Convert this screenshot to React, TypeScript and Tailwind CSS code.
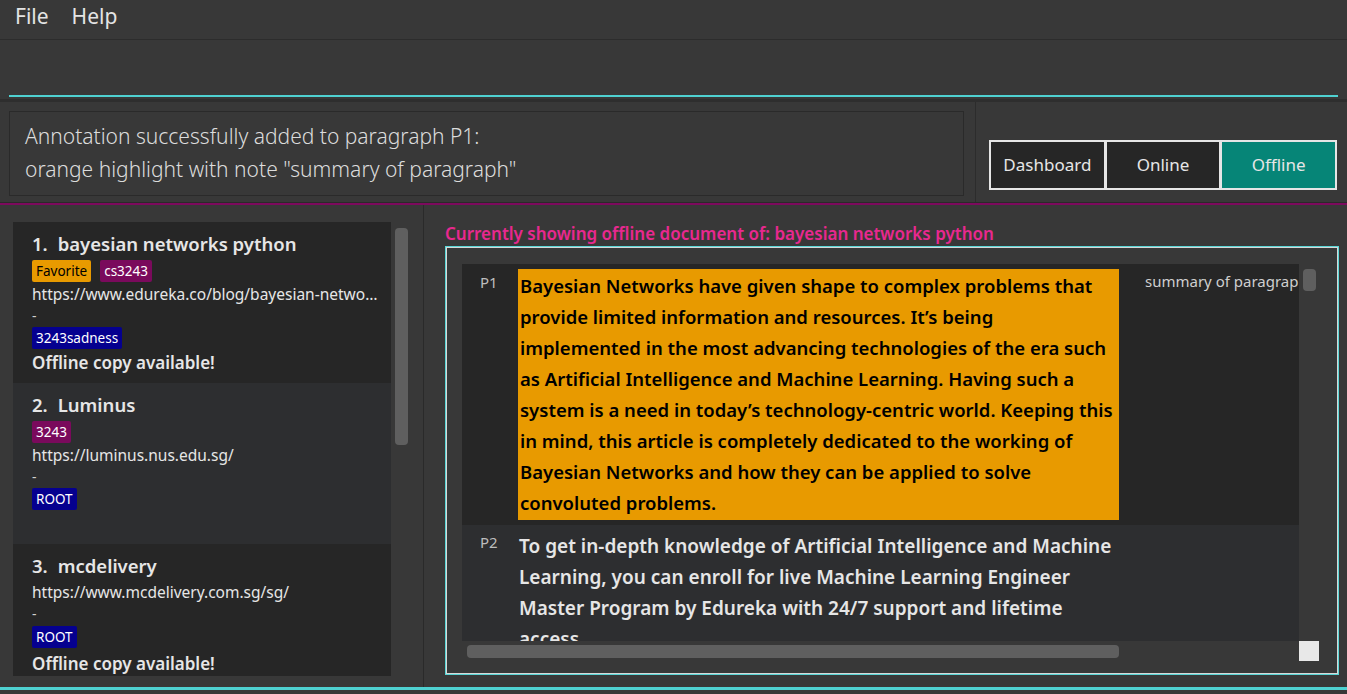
import React from 'react';

const FONT = { fontFamily: '"Noto Sans", "Open Sans", sans-serif' };

type Bookmark = {
  idx: number;
  title: string;
  tags: { label: string; color: string }[];
  url: string;
  folder: string;
  offline: boolean;
  bg: string;
};

const bookmarks: Bookmark[] = [
  {
    idx: 1,
    title: 'bayesian networks python',
    tags: [
      { label: 'Favorite', color: 'bg-[#e89a00] text-black' },
      { label: 'cs3243', color: 'bg-[#7a0a5c] text-white' },
    ],
    url: 'https://www.edureka.co/blog/bayesian-networks/',
    folder: '3243sadness',
    offline: true,
    bg: 'bg-[#262626]',
  },
  {
    idx: 2,
    title: 'Luminus',
    tags: [{ label: '3243', color: 'bg-[#7a0a5c] text-white' }],
    url: 'https://luminus.nus.edu.sg/',
    folder: 'ROOT',
    offline: false,
    bg: 'bg-[#2d2e30]',
  },
  {
    idx: 3,
    title: 'mcdelivery',
    tags: [],
    url: 'https://www.mcdelivery.com.sg/sg/',
    folder: 'ROOT',
    offline: true,
    bg: 'bg-[#262626]',
  },
];

function BookmarkCard({ b }: { b: Bookmark }) {
  return (
    <div className={`${b.bg} h-[161px] shrink-0 pl-[19px] pr-[10px] pt-[10px] text-[#e6e6e6]`}>
      <div className="flex items-center text-[18.5px] font-semibold leading-[24px] gap-[10px]">
        <span>{b.idx}.</span>
        <span>{b.title}</span>
      </div>
      {b.tags.length > 0 && (
        <div className="flex gap-[9px] mt-[4px]">
          {b.tags.map((t) => (
            <span key={t.label} className={`${t.color} text-[13.5px] leading-[22px] px-[4px] rounded-[2px]`}>
              {t.label}
            </span>
          ))}
        </div>
      )}
      <div
        className={`text-[15.5px] leading-[22px] whitespace-nowrap overflow-hidden text-ellipsis w-[347px] ${
          b.tags.length > 0 ? 'mt-[1px]' : 'mt-[3px]'
        }`}
      >
        {b.url}
      </div>
      <div className="text-[14px] leading-[22px] text-[#cfcfcf]">-</div>
      <div className={`flex ${b.tags.length > 0 ? '' : 'mt-[1px]'}`}>
        <span className="bg-[#05008f] text-white text-[13.5px] leading-[22px] px-[4px] rounded-[2px]">{b.folder}</span>
      </div>
      {b.offline && (
        <div className={`text-[17px] font-semibold leading-[26px] ${b.tags.length > 0 ? 'mt-[1px]' : 'mt-[3px]'}`}>
          Offline copy available!
        </div>
      )}
    </div>
  );
}

const p1 =
  'Bayesian Networks have given shape to complex problems that provide limited information and resources. It\u2019s being implemented in the most advancing technologies of the era such as Artificial Intelligence and Machine Learning. Having such a system is a need in today\u2019s technology-centric world. Keeping this in mind, this article is completely dedicated to the working of Bayesian Networks and how they can be applied to solve convoluted problems.';
const p2 =
  'To get in-depth knowledge of Artificial Intelligence and Machine Learning, you can enroll for live Machine Learning Engineer Master Program by Edureka with 24/7 support and lifetime access.';

export default function App() {
  return (
    <div className="w-[1347px] h-[694px] bg-[#383838] flex flex-col overflow-hidden" style={FONT}>
      {/* menu */}
      <div className="h-[40px] shrink-0 flex items-center gap-[23px] px-[15px] pb-[5px] border-b border-[#2c2c2c] text-[21px] text-[#e4e4e4]">
        <span>File</span>
        <span>Help</span>
      </div>

      {/* command box */}
      <div className="h-[62px] shrink-0 px-[9px] pt-[14px] border-b-[3px] border-[#2e2e2e]">
        <div className="h-[43px] border-b-2 border-[#4fd1d1]" />
      </div>

      {/* result + tabs */}
      <div className="h-[100px] shrink-0 flex">
        <div className="w-[976px] shrink-0 border-r border-[#2c2c2c] pl-[9px] pt-[9px]">
          <div className="w-[955px] h-[85px] border border-[#2a2a2a] pl-[15px] pt-[8px] text-[21px] leading-[33px] text-[#dcdcdc] font-light">
            <div>Annotation successfully added to paragraph P1:</div>
            <div>orange highlight with note "summary of paragraph"</div>
          </div>
        </div>
        <div className="flex-1 pl-[13px] pt-[38px]">
          <div className="flex gap-[3px] p-[2px] bg-[#e6e6e6] w-[348px] h-[50px]">
            {['Dashboard', 'Online', 'Offline'].map((t) => (
              <div
                key={t}
                className={`flex-1 flex items-center justify-center text-[17px] ${
                  t === 'Offline' ? 'bg-[#068577] text-[#e6e6e6]' : 'bg-[#262626] text-[#e6e6e6]'
                }`}
              >
                {t}
              </div>
            ))}
          </div>
        </div>
      </div>

      <div className="h-[3px] shrink-0 bg-[#7d0a5e] border-t border-[#2a2a2a]" />

      {/* main */}
      <div className="flex flex-1 min-h-0">
        {/* list panel */}
        <div className="w-[424px] shrink-0 border-r border-[#2a2a2a] flex pl-[13px] pt-[17px] pb-[11px]">
          <div className="w-[378px] flex flex-col overflow-hidden">
            {bookmarks.map((b) => (
              <BookmarkCard key={b.idx} b={b} />
            ))}
          </div>
          <div className="w-[14px] ml-[4px] pt-[6px]">
            <div className="h-[217px] w-[13px] rounded-[4px] bg-[#5f5f5f]" />
          </div>
        </div>

        {/* document panel */}
        <div className="flex-1 min-h-0 flex flex-col pl-[21px] pr-[8px] pt-[18px] pb-[12px]">
          <div className="text-[#e8288f] text-[17px] font-semibold leading-[22px] h-[23px] shrink-0">
            Currently showing offline document of: bayesian networks python
          </div>
          <div className="flex-1 min-h-0 border border-[#5ad6d6]">
            <div className="h-full border border-[#d8d8d8] pl-[15px] pr-[17px] pt-[16px] pb-[12px] flex flex-col overflow-hidden">
              <div className="flex flex-1 min-h-0">
                <div className="w-[837px] overflow-hidden flex flex-col">
                  <div className="flex bg-[#262626] h-[261px] shrink-0 pt-[5px]">
                    <div className="w-[56px] shrink-0 pl-[18px] text-[15px] text-[#bdbdbd] leading-[22px] pt-[2px]">P1</div>
                    <div className="w-[601px] shrink-0 h-[251px] bg-[#e89a00] text-black text-[18.5px] font-semibold leading-[31px] pl-[2px] pr-[4px] pt-[1px]">
                      {p1}
                    </div>
                    <div className="pl-[26px] flex-1 overflow-hidden text-[15px] text-[#cfcfcf] whitespace-nowrap leading-[20px] pt-[2px]">
                      summary of paragraph
                    </div>
                  </div>
                  <div className="flex bg-[#2d2e30] flex-1 min-h-0 pt-[6px] overflow-hidden">
                    <div className="w-[56px] shrink-0 pl-[18px] text-[15px] text-[#bdbdbd] leading-[22px]">P2</div>
                    <div className="w-[602px] shrink-0 text-[#e6e6e6] text-[19px] font-semibold leading-[31px] pl-[1px]">{p2}</div>
                  </div>
                </div>
                <div className="w-[20px] bg-[#383838] pt-[5px] flex justify-center">
                  <div className="w-[13px] h-[22px] rounded-[4px] bg-[#5f5f5f]" />
                </div>
              </div>
              <div className="h-[20px] shrink-0 flex">
                <div className="w-[837px] bg-[#383838] pl-[5px] flex items-center">
                  <div className="w-[652px] h-[13px] rounded-[4px] bg-[#5f5f5f]" />
                </div>
                <div className="w-[20px] bg-[#e8e8e8]" />
              </div>
            </div>
          </div>
        </div>
      </div>

      <div className="h-[3px] shrink-0 bg-[#4fd1d1]" />
      <div className="h-[4px] shrink-0 bg-[#383838]" />
    </div>
  );
}
